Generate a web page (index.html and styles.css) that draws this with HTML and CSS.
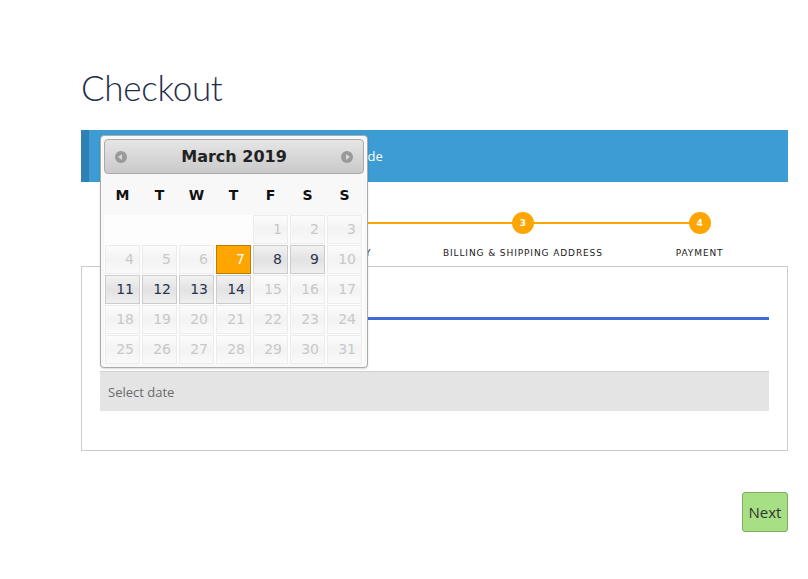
FILE: index.html
```html
<!DOCTYPE html>
<html lang="en">
<head>
  <meta charset="UTF-8" />
  <meta name="viewport" content="width=device-width, initial-scale=1.0"/>
  <title>Checkout</title>
  <link rel="stylesheet" href="styles.css">
</head>
<body>
  <div class="checkout">
    <h1>Checkout</h1>

    <div class="coupon-bar">
      <span>Have a coupon? Click here to enter your code</span>
    </div>

    <div class="steps">
      <div class="step done"><span class="dot">1</span><span class="label">Login</span></div>
      <div class="step done"><span class="dot">2</span><span class="label">Delivery</span></div>
      <div class="step"><span class="dot">3</span><span class="label">Billing &amp; Shipping Address</span></div>
      <div class="step last"><span class="dot">4</span><span class="label">Payment</span></div>
    </div>

    <div class="form-box">
      <div class="tab-line"></div>
      <input type="text" class="date-input" placeholder="Select date" />
    </div>

    <div class="actions">
      <button type="button" class="next-btn">Next</button>
    </div>

    <!-- datepicker popup -->
    <div class="datepicker">
      <div class="dp-header">
        <span class="dp-nav prev"></span>
        <span class="dp-title">March 2019</span>
        <span class="dp-nav next"></span>
      </div>
      <div class="dp-days">
        <span>M</span><span>T</span><span>W</span><span>T</span><span>F</span><span>S</span><span>S</span>
      </div>
      <div class="dp-grid" id="dpGrid"></div>
    </div>
  </div>

  <script>
    // March 2019 starts on a Friday, only 7-14 (not sunday 10) are selectable
    const grid = document.getElementById("dpGrid");
    const open = [8, 9, 11, 12, 13, 14];
    for (let i = 0; i < 4; i++) {
      const empty = document.createElement("span");
      empty.className = "cell empty";
      grid.appendChild(empty);
    }
    for (let d = 1; d <= 31; d++) {
      const cell = document.createElement("span");
      cell.textContent = d;
      if (d === 7) {
        cell.className = "cell active";
      } else if (open.includes(d)) {
        cell.className = "cell";
      } else {
        cell.className = "cell disabled";
      }
      grid.appendChild(cell);
    }
  </script>
</body>
</html>
```

FILE: styles.css
```css
body {
  margin: 0;
  padding: 0;
  background: #fff;
  font-family: "Open Sans", Arial, sans-serif;
}

.checkout {
  position: relative;
  width: 707px;
  margin-left: 81px;
  padding-top: 62px;
}

.checkout h1 {
  margin: 0;
  font-family: Lato, sans-serif;
  font-weight: 300;
  font-size: 35px;
  letter-spacing: -0.3px;
  line-height: 50px;
  color: #1f2d4d;
}

.coupon-bar {
  margin-top: 18px;
  height: 52px;
  background: #3d9cd3;
  border-left: 8px solid #2f80b5;
  display: flex;
  align-items: center;
  padding-left: 20px;
  color: #fff;
  font-size: 13px;
}

.steps {
  display: grid;
  grid-template-columns: repeat(4, 1fr);
  margin-top: 30px;
  height: 54px;
}

.step {
  position: relative;
  display: flex;
  flex-direction: column;
  align-items: center;
}

.step::after {
  content: "";
  position: absolute;
  top: 10px;
  left: 50%;
  width: 100%;
  height: 2px;
  background: #ffa500;
}

.step.last::after {
  display: none;
}

.step .dot {
  position: relative;
  z-index: 1;
  width: 22px;
  height: 22px;
  border-radius: 50%;
  background: #ffa500;
  color: #fff;
  font-family: "DejaVu Sans", sans-serif;
  font-weight: bold;
  font-size: 9px;
  line-height: 22px;
  text-align: center;
}

.step .label {
  margin-top: 14px;
  font-family: "DejaVu Sans", sans-serif;
  font-size: 9px;
  letter-spacing: 0.9px;
  text-transform: uppercase;
  color: #1a1a1a;
}

.form-box {
  border: 1px solid #ccc;
  height: 183px;
  padding: 0 18px;
}

.tab-line {
  margin-top: 50px;
  height: 3px;
  background: #3f6bd8;
}

.date-input {
  display: block;
  box-sizing: border-box;
  width: 100%;
  height: 40px;
  margin-top: 51px;
  padding: 0 8px;
  border: none;
  border-top: 1px solid #cfcfcf;
  background: #e4e4e4;
  font-family: "Open Sans", sans-serif;
  font-size: 13px;
  color: #666;
}

.date-input::placeholder {
  color: #6a6a6a;
}

.actions {
  display: flex;
  justify-content: flex-end;
  margin-top: 41px;
}

.next-btn {
  width: 46px;
  height: 40px;
  padding: 0;
  background: #a6df84;
  border: 1px solid #7fae63;
  border-radius: 3px;
  font-family: "Open Sans", sans-serif;
  font-size: 15px;
  color: #333;
  cursor: pointer;
}

/* datepicker */

.datepicker {
  position: absolute;
  z-index: 10;
  left: 19px;
  top: 135px;
  width: 260px;
  padding: 3px;
  background: #f8f8f8;
  border: 1px solid #aaa;
  border-radius: 4px;
  box-shadow: 0 1px 2px rgba(0,0,0,0.15);
  font-family: "DejaVu Sans", Verdana, sans-serif;
}

.dp-header {
  display: flex;
  align-items: center;
  justify-content: space-between;
  height: 33px;
  padding: 0 10px;
  border: 1px solid #aaa;
  border-radius: 4px;
  background: linear-gradient(to bottom, #e6e6e6, #c9c9c9);
}

.dp-title {
  font-weight: bold;
  font-size: 16px;
  color: #222;
}

.dp-nav {
  position: relative;
  width: 12px;
  height: 12px;
  border-radius: 50%;
  background: #9a9a9a;
}

.dp-nav::after {
  content: "";
  position: absolute;
  top: 3px;
  border-top: 3px solid transparent;
  border-bottom: 3px solid transparent;
}

.dp-nav.prev::after {
  left: 3px;
  border-right: 4px solid #d8d8d8;
}

.dp-nav.next::after {
  left: 5px;
  border-left: 4px solid #d8d8d8;
}

.dp-days {
  display: grid;
  grid-template-columns: repeat(7, 35px);
  column-gap: 2px;
  height: 41px;
  align-items: center;
  padding-left: 1px;
  font-weight: bold;
  font-size: 14px;
  color: #111;
  text-align: center;
}

.dp-grid {
  display: grid;
  grid-template-columns: repeat(7, 35px);
  grid-auto-rows: 29px;
  gap: 1px 2px;
  padding-left: 1px;
  background: #fdfdfd;
}

.cell {
  box-sizing: border-box;
  padding-right: 5px;
  border: 1px solid #ccc;
  background: linear-gradient(to bottom, #f2f2f2, #e2e2e2 50%, #efefef);
  font-size: 14px;
  line-height: 27px;
  text-align: right;
  color: #2b3350;
}

.cell.empty {
  border: none;
  background: transparent;
}

.cell.disabled {
  border-color: #ececec;
  background: linear-gradient(to bottom, #fcfcfc, #f3f3f3 50%, #fafafa);
  color: #c8c8c8;
}

.cell.active {
  border-color: #c07a00;
  background: #ffa500;
  color: #fff;
}
```
